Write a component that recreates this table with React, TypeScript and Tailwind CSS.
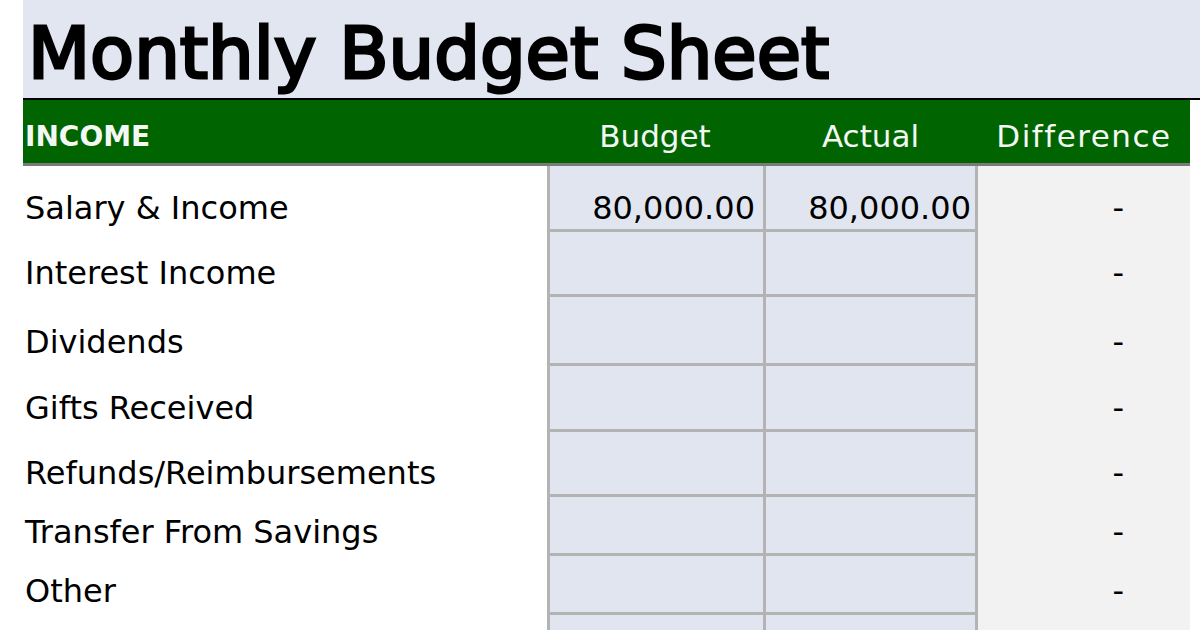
import React from "react";

const rows: { label: string; budget: string; actual: string; h: string }[] = [
  { label: "Salary & Income", budget: "80,000.00", actual: "80,000.00", h: "h-[66px]" },
  { label: "Interest Income", budget: "", actual: "", h: "h-[65px]" },
  { label: "Dividends", budget: "", actual: "", h: "h-[69px]" },
  { label: "Gifts Received", budget: "", actual: "", h: "h-[66px]" },
  { label: "Refunds/Reimbursements", budget: "", actual: "", h: "h-[65px]" },
  { label: "Transfer From Savings", budget: "", actual: "", h: "h-[59px]" },
  { label: "Other", budget: "", actual: "", h: "h-[59px]" },
  { label: "", budget: "", actual: "", h: "h-[59px]" },
];

export default function App() {
  return (
    <div className="w-[1200px] h-[630px] overflow-hidden bg-white pl-[23px] font-['DejaVu_Sans',sans-serif] text-black">
      <div className="h-[100px] bg-[#e2e6f1] border-b-2 border-black flex items-end pl-[5px] pb-[9px]">
        <span className="text-[72px] leading-none font-normal tracking-[0px] [-webkit-text-stroke-width:3px] [-webkit-text-stroke-color:#000]">Monthly Budget Sheet</span>
      </div>
      <div className="grid grid-cols-[524px_216px_215px_212px] w-[1167px] h-[66px] bg-[#006400] border-b-[3px] border-[#7a7a7a] text-[#f4f8f4]">
        <div className="flex items-center pl-[2px] pt-[10px] text-[28px] font-bold leading-none">INCOME</div>
        <div className="flex items-center justify-center pt-[10px] text-[31px] leading-none">Budget</div>
        <div className="flex items-center justify-center pt-[10px] text-[31px] leading-none">Actual</div>
        <div className="flex items-center justify-center pt-[10px] text-[31px] leading-none tracking-[1.5px]">Difference</div>
      </div>
      {rows.map((r, i) => (
        <div key={i} className={`grid grid-cols-[524px_216px_215px_212px] w-[1167px] ${r.h} text-[32px] leading-none`}>
          <div className="flex items-end pl-[2px] pb-[8px] bg-white">{r.label}</div>
          <div className="flex items-end justify-end pr-[8px] pb-[5px] bg-[#e1e5f0] border-l-[3px] border-b-[3px] border-[#b3b3b3]">{r.budget}</div>
          <div className="flex items-end justify-end pr-[4px] pb-[5px] bg-[#e1e5f0] border-l-[3px] border-r-[3px] border-b-[3px] border-[#b3b3b3]">{r.actual}</div>
          <div className="flex items-end justify-end pr-[66px] pb-[8px] bg-[#f2f2f2]">{r.label ? "-" : ""}</div>
        </div>
      ))}
    </div>
  );
}
